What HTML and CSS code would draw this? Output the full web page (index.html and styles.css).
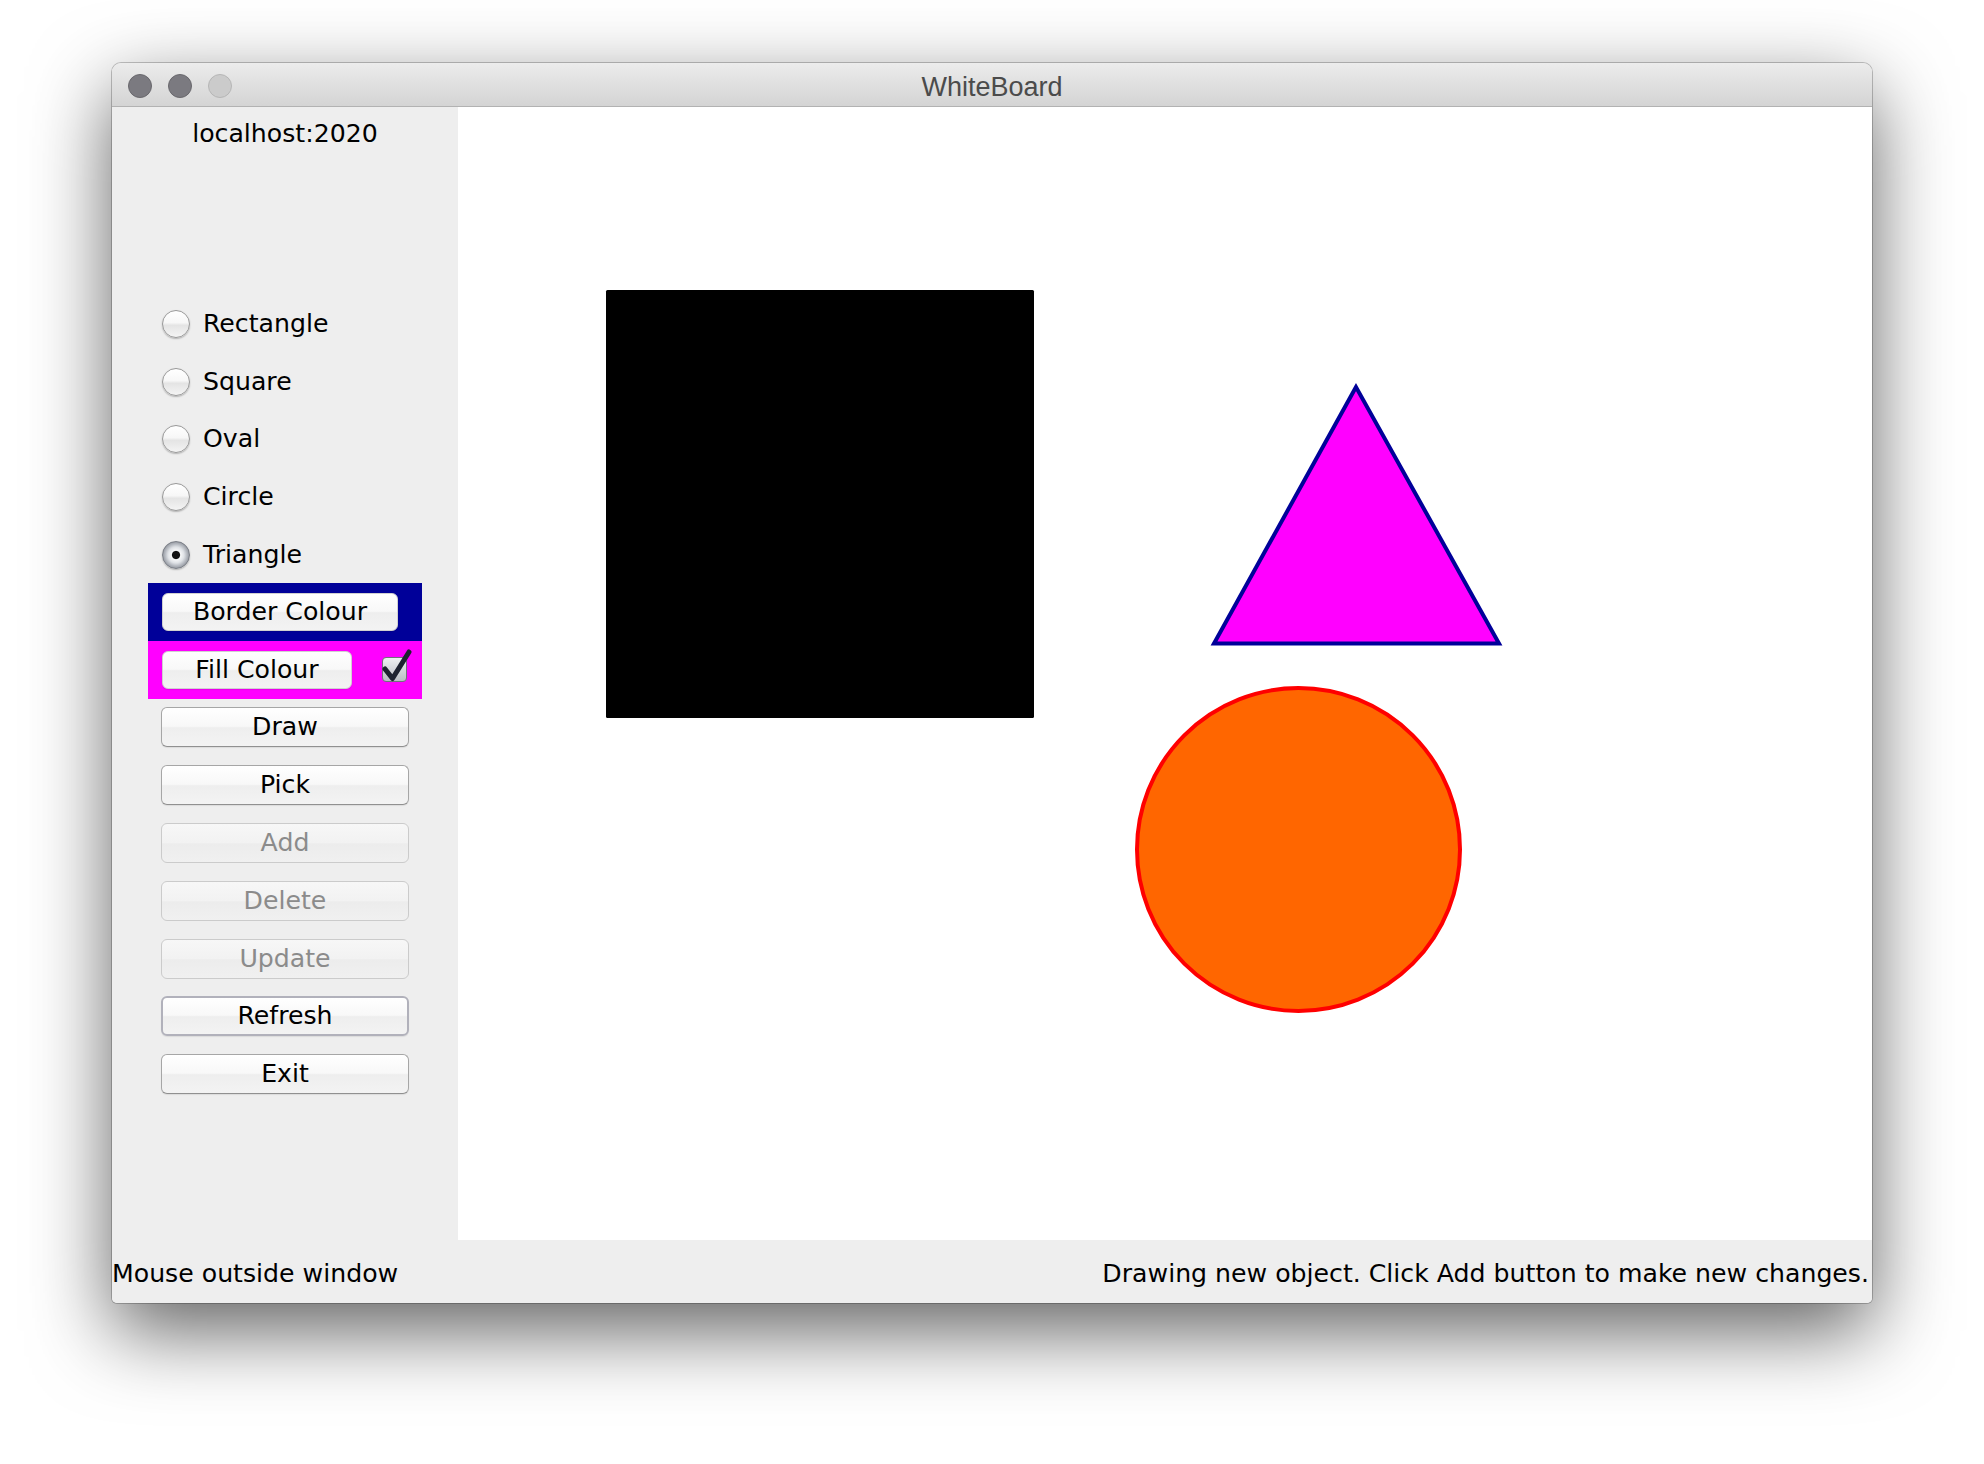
FILE: index.html
```html
<!DOCTYPE html>
<html lang="en">
<head>
<meta charset="utf-8">
<title>WhiteBoard</title>
<link rel="stylesheet" href="styles.css">
</head>
<body>
<div class="window">
  <div class="titlebar">
    <div class="lights">
      <span class="light"></span>
      <span class="light"></span>
      <span class="light light-off"></span>
    </div>
    <div class="title">WhiteBoard</div>
    <div class="spacer"></div>
  </div>
  <div class="main">
    <aside class="sidebar">
      <div class="host">localhost:2020</div>
      <div class="controls">
        <div class="radio"><span class="radio-dot"></span><span class="radio-label">Rectangle</span></div>
        <div class="radio"><span class="radio-dot"></span><span class="radio-label">Square</span></div>
        <div class="radio"><span class="radio-dot"></span><span class="radio-label">Oval</span></div>
        <div class="radio"><span class="radio-dot"></span><span class="radio-label">Circle</span></div>
        <div class="radio"><span class="radio-dot radio-on"></span><span class="radio-label">Triangle</span></div>
        <div class="swatch swatch-border"><button class="btn btn-border">Border Colour</button></div>
        <div class="swatch swatch-fill">
          <button class="btn btn-fill">Fill Colour</button>
          <span class="checkbox">
            <svg class="check" width="34" height="36" viewBox="0 0 34 36"><path d="M6 20 L13.5 29.5 L30 3" fill="none" stroke="#1d2230" stroke-width="5" stroke-linecap="round" stroke-linejoin="round"/></svg>
          </span>
        </div>
        <div class="row"><button class="btn">Draw</button></div>
        <div class="row"><button class="btn">Pick</button></div>
        <div class="row"><button class="btn btn-disabled">Add</button></div>
        <div class="row"><button class="btn btn-disabled">Delete</button></div>
        <div class="row"><button class="btn btn-disabled">Update</button></div>
        <div class="row"><button class="btn btn-focus">Refresh</button></div>
        <div class="row"><button class="btn">Exit</button></div>
      </div>
    </aside>
    <div class="canvas">
      <svg class="drawing" width="1414" height="1133" viewBox="0 0 1414 1133">
        <rect x="148" y="183" width="428" height="428" rx="1.5" fill="#000000"/>
        <polygon points="898,280 756,536.5 1041,536.5" fill="#ff00ff" stroke="#000099" stroke-width="4" stroke-linejoin="miter"/>
        <circle cx="840.5" cy="742.5" r="161.5" fill="#ff6600" stroke="#ff0000" stroke-width="4"/>
      </svg>
    </div>
  </div>
  <div class="statusbar">
    <span class="status-left">Mouse outside window</span>
    <span class="status-right">Drawing new object. Click Add button to make new changes.</span>
  </div>
</div>
</body>
</html>
```

FILE: styles.css
```css
html, body {
  margin: 0;
  padding: 0;
}

body {
  width: 1984px;
  height: 1464px;
  box-sizing: border-box;
  padding: 63px 0 0 112px;
  background: #ffffff;
  overflow: hidden;
  font-family: "DejaVu Sans", "Noto Sans", sans-serif;
  font-size: 25.2px;
  color: #000;
}

.window {
  width: 1760px;
  height: 1240px;
  display: flex;
  flex-direction: column;
  background: #eeeeee;
  border-radius: 9px 9px 5px 5px;
  overflow: hidden;
  box-shadow: 0 0 0 1px rgba(0, 0, 0, 0.22), 0 28px 80px rgba(0, 0, 0, 0.62);
}

/* Title bar */
.titlebar {
  height: 44px;
  flex: none;
  box-sizing: border-box;
  padding-top: 3px;
  display: grid;
  grid-template-columns: 1fr auto 1fr;
  align-items: center;
  background: linear-gradient(#ececec, #e2e2e2 40%, #d4d4d4);
  border-bottom: 1px solid #b2b2b2;
}

.lights {
  display: flex;
  gap: 16px;
  padding-left: 16px;
}

.light {
  width: 24px;
  height: 24px;
  box-sizing: border-box;
  border-radius: 50%;
  background: #7b7a80;
  border: 1px solid #69686d;
}

.light-off {
  background: #cbcbcb;
  border-color: #b6b6b6;
}

.title {
  font-family: "Liberation Sans", Arial, sans-serif;
  font-size: 27px;
  color: #4b4b4b;
  line-height: 30px;
  padding-top: 2px;
}

/* Main area */
.main {
  display: flex;
  height: 1133px;
  flex: none;
}

.sidebar {
  width: 346px;
  flex: none;
  background: #eeeeee;
  display: flex;
  flex-direction: column;
}

.host {
  margin-top: 12px;
  line-height: 30px;
  text-align: center;
}

.controls {
  margin: 145px 0 0 36px;
  width: 274px;
  display: grid;
  grid-auto-rows: 57.8px;
}

.radio {
  display: flex;
  align-items: center;
  padding-left: 14px;
  padding-top: 2px;
  gap: 13px;
}

.radio-dot {
  width: 28px;
  height: 28px;
  box-sizing: border-box;
  border-radius: 50%;
  border: 1px solid #999999;
  background: linear-gradient(#ffffff, #f7f7f7 45%, #e4e4e4 55%, #f4f4f4);
  box-shadow: 0 1px 1.5px rgba(0, 0, 0, 0.25);
  flex: none;
}

.radio-on {
  border-color: #7a7e86;
  background: radial-gradient(circle at 50% 50%, #121212 0 3.6px, #f6f7f8 4.6px, #dfe2e6 8px, #b4b8bf 11px, #8d9199 14px);
}

.radio-label {
  line-height: 30px;
}

.swatch {
  display: flex;
  align-items: center;
  padding-left: 14px;
}

.swatch-border {
  background: #000099;
}

.swatch-fill {
  background: #ff00ff;
}

.row {
  display: flex;
  align-items: center;
  padding: 0 13px;
}

.btn {
  font-family: inherit;
  font-size: 25.2px;
  color: #000;
  height: 40px;
  width: 248px;
  padding: 0;
  box-sizing: border-box;
  border: 1px solid #a6a6a6;
  border-bottom-color: #909090;
  border-radius: 6px;
  background: linear-gradient(#ffffff, #f8f8f8 48%, #eeeeee 52%, #f3f3f3);
  box-shadow: 0 1px 1px rgba(0, 0, 0, 0.08);
  line-height: 36px;
  text-align: center;
}

.btn-border {
  width: 236px;
  height: 38px;
  border-color: #d0d0d0;
  line-height: 33px;
}

.btn-fill {
  width: 190px;
  height: 38px;
  border-color: #d0d0d0;
  line-height: 33px;
}

.btn-disabled {
  color: #8b8b8b;
  border-color: #cbcbcb;
  background: linear-gradient(#f7f7f7, #f2f2f2 50%, #ececec 52%, #f0f0f0);
  box-shadow: none;
}

.btn-focus {
  border: 2px solid #b1b1bb;
  line-height: 34px;
}

.checkbox {
  position: relative;
  margin-left: 30px;
  width: 25px;
  height: 25px;
  box-sizing: border-box;
  border: 1px solid #6f727a;
  border-radius: 4px;
  background: linear-gradient(#eef0f2, #d3d6db 50%, #b9bdc4);
  flex: none;
}

.check {
  position: absolute;
  left: -4px;
  top: -9px;
}

/* Drawing canvas */
.canvas {
  flex: 1;
  background: #ffffff;
}

.drawing {
  display: block;
}

/* Status bar */
.statusbar {
  height: 63px;
  flex: none;
  box-sizing: border-box;
  padding: 4px 3px 0 0;
  display: flex;
  justify-content: space-between;
  align-items: center;
  background: #eeeeee;
  line-height: 30px;
}
```
